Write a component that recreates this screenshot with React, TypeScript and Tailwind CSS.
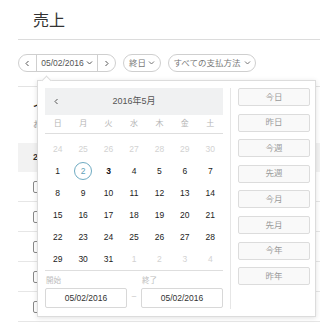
import React from 'react';

const Chevron = ({ dir = 'down', className = '' }: { dir?: 'down' | 'left' | 'right'; className?: string }) => {
    const d = dir === 'down' ? 'M1 1.5 L3.5 4 L6 1.5' : dir === 'left' ? 'M4.5 1 L2 3.5 L4.5 6' : 'M2.5 1 L5 3.5 L2.5 6';
    return (
        <svg width="7" height="7" viewBox="0 0 7 7" className={className}>
            <path d={d} fill="none" stroke="currentColor" strokeWidth="1" />
        </svg>
    );
};

const weekdays = ['日', '月', '火', '水', '木', '金', '土'];

const weeks: { n: number; muted?: boolean }[][] = [
    [24, 25, 26, 27, 28, 29, 30].map((n) => ({ n, muted: true })),
    [1, 2, 3, 4, 5, 6, 7].map((n) => ({ n })),
    [8, 9, 10, 11, 12, 13, 14].map((n) => ({ n })),
    [15, 16, 17, 18, 19, 20, 21].map((n) => ({ n })),
    [22, 23, 24, 25, 26, 27, 28].map((n) => ({ n })),
    [
        { n: 29 }, { n: 30 }, { n: 31 },
        { n: 1, muted: true }, { n: 2, muted: true }, { n: 3, muted: true }, { n: 4, muted: true },
    ],
];

const ranges = ['今日', '昨日', '今週', '先週', '今月', '先月', '今年', '昨年'];

const DatePopover = () => {
    return (
        <div className="absolute left-[37px] top-[80px] w-[279px] h-[237px] bg-white border border-[#dcdcdc] shadow-[0_1px_5px_rgba(0,0,0,0.12)] p-[7px] flex">
            {/* arrow */}
            <div className="absolute left-[5px] -top-[4px] w-[7px] h-[7px] bg-white border-l border-t border-[#dcdcdc] rotate-45"></div>

            <div className="w-[178px] flex flex-col">
                <div className="h-[27px] bg-[#f0f1f2] flex items-center relative">
                    <Chevron dir="left" className="absolute left-[8px] text-[#555]" />
                    <div className="w-full text-center text-[9px] text-[#555]">2016年5月</div>
                </div>
                <div className="grid grid-cols-7 h-[19px] items-center border-b border-[#dedede]">
                    {weekdays.map((w) => (
                        <div key={w} className="text-center text-[8px] text-[#b5b5b5]">{w}</div>
                    ))}
                </div>
                <div className="pt-[4px] border-b border-[#dedede]">
                    {weeks.map((week, i) => (
                        <div key={i} className="grid grid-cols-7 h-[22px] items-center">
                            {week.map((d, j) => (
                                <div key={j} className="flex justify-center">
                                    {i === 1 && d.n === 2 ? (
                                        <div className="w-[18px] h-[18px] rounded-full border border-[#6fabc2] text-[#5f9fb8] text-[8.5px] flex items-center justify-center">
                                            {d.n}
                                        </div>
                                    ) : (
                                        <span
                                            className={
                                                d.muted
                                                    ? 'text-[8.5px] text-[#d2d2d2]'
                                                    : i === 1 && d.n === 3
                                                    ? 'text-[8.5px] text-[#111] font-bold'
                                                    : 'text-[8.5px] text-[#222]'
                                            }
                                        >
                                            {d.n}
                                        </span>
                                    )}
                                </div>
                            ))}
                        </div>
                    ))}
                </div>
                <div className="flex mt-[4px]">
                    <div className="w-[82px]">
                        <div className="text-[7.5px] text-[#bdbdbd] h-[13px] pl-[1px]">開始</div>
                        <div className="h-[20px] border border-[#d8d8d8] rounded-[2px] flex items-center justify-center text-[8.5px] text-[#333]">
                            05/02/2016
                        </div>
                    </div>
                    <div className="w-[14px] flex items-end justify-center h-[33px] pb-[6px] text-[8px] text-[#bbb]">–</div>
                    <div className="w-[82px]">
                        <div className="text-[7.5px] text-[#bdbdbd] h-[13px] pl-[1px]">終了</div>
                        <div className="h-[20px] border border-[#d8d8d8] rounded-[2px] flex items-center justify-center text-[8.5px] text-[#333]">
                            05/02/2016
                        </div>
                    </div>
                </div>
            </div>

            <div className="ml-[7px] border-l border-[#e6e6e6] pl-[7px] w-[80px]">
                <div className="flex flex-col gap-[7.6px]">
                    {ranges.map((r) => (
                        <div
                            key={r}
                            className="h-[18px] w-[72px] border border-[#dcdcdc] bg-[#f9f9f9] rounded-[2px] flex items-center justify-center text-[8.5px] text-[#9a9a9a]"
                        >
                            {r}
                        </div>
                    ))}
                </div>
            </div>
        </div>
    );
};

export default function App() {
    return (
        <div className="relative w-[320px] h-[323px] overflow-hidden bg-white font-['Liberation_Sans','Noto_Sans_CJK_JP',sans-serif]">
            <div className="ml-[18px] h-[40px] border-b border-[#dcdcdc] pl-[15px] pt-[12px]">
                <h1 className="text-[16px] leading-[18px] text-[#333]">売上</h1>
            </div>

            <div className="ml-[18px] mt-[14px] flex gap-[7px] text-[8.5px] text-[#555]">
                <div className="h-[18px] w-[98px] rounded-full border border-[#cfcfcf] flex items-center">
                    <div className="w-[18px] h-full flex items-center justify-center border-r border-[#cfcfcf]">
                        <Chevron dir="left" />
                    </div>
                    <div className="flex-1 flex items-center justify-center gap-[2px]">
                        05/02/2016
                        <Chevron />
                    </div>
                    <div className="w-[18px] h-full flex items-center justify-center border-l border-[#cfcfcf]">
                        <Chevron dir="right" />
                    </div>
                </div>
                <div className="h-[18px] w-[38px] rounded-full border border-[#cfcfcf] flex items-center justify-center gap-[2px] text-[#777]">
                    終日
                    <Chevron />
                </div>
                <div className="h-[18px] w-[88px] rounded-full border border-[#cfcfcf] flex items-center justify-center gap-[3px] text-[#777]">
                    すべての支払方法
                    <Chevron />
                </div>
            </div>

            {/* table behind the popover, mostly hidden */}
            <div className="ml-[18px] mt-[14px] border-t border-[#e3e3e3]">
                <div className="h-[56px] pl-[15px] pt-[14px]">
                    <div className="text-[10px] font-bold text-[#222] leading-[12px]">イ</div>
                    <div className="text-[8px] text-[#999] mt-[6px]">お</div>
                </div>
                <div className="h-[29px] bg-[#f2f2f2] pl-[15px] flex items-center text-[9px] text-[#333] font-bold">2</div>
                {[0, 1, 2, 3, 4].map((i) => (
                    <div key={i} className="h-[30px] border-b border-[#e6e6e6] pl-[15px] flex items-center">
                        <div className="w-[10px] h-[12px] border border-[#8a8a8a] rounded-[2px]"></div>
                    </div>
                ))}
            </div>

            <DatePopover />
        </div>
    );
}
